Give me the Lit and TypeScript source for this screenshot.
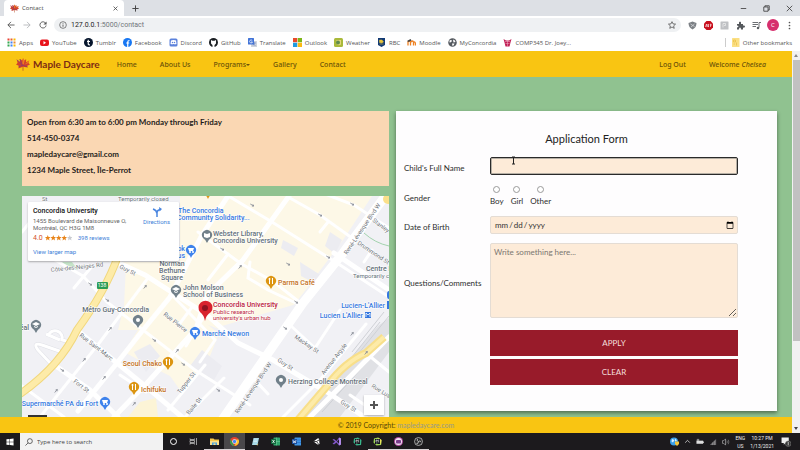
import { LitElement, html, svg, css } from "lit";
import { customElement } from "lit/decorators.js";

const icon = (body: unknown, cls = "i9") =>
  html`<svg class=${cls} viewBox="0 0 18 18" aria-hidden="true">${body}</svg>`;

const leaf = svg`
  <path d="M9 17 L9 11" stroke="#b5532a" stroke-width="1" fill="none"/>
  <path d="M9 1 L11 4 L13 2 L13 6 L17 4 L16 7 L18 9 L14 11 L15 13 L9 12 L3 14 L4 11 L0 9 L2 7 L1 3 L5 6 L5 2 L8 4 Z" fill="#d2402c"/>
  <path d="M9 1 L11 4 L10 9 L8 8 Z M17 4 L16 7 L11 9 Z" fill="#ee7d1f"/>
  <path d="M1 3 L5 6 L8 11 M5 2 L8 9 M3 12 L9 10 L15 12" stroke="#8c3d6b" stroke-width="1" fill="none"/>`;

const bookmarks: { name: string; art: unknown }[] = [
  { name: "Apps", art: svg`${[1, 7, 13].map((y, r) => [1, 7, 13].map((x, c) => svg`<rect x=${x} y=${y} width="4" height="4" fill=${["#ea4335", "#e8602c", "#fbbc05", "#34a853", "#4285f4", "#ea8a35", "#34a853", "#4285f4", "#fbbc05"][r * 3 + c]}/>`))}` },
  { name: "YouTube", art: svg`<rect y="3" width="18" height="13" rx="4" fill="#e8141c"/><path d="M7 6 L12 9.500 L7 13Z" fill="#fff"/>` },
  { name: "Tumblr", art: svg`<circle cx="9" cy="9" r="9" fill="#06152c"/><path d="M8.500 3.500 V12 Q8.500 14 12 13.500 M6 7 H12" stroke="#fff" stroke-width="2.400" fill="none"/>` },
  { name: "Facebook", art: svg`<circle cx="9" cy="9" r="9" fill="#1877f2"/><path d="M9.500 18 V8 Q9.500 5 13 5 M6.500 10 H12.500" stroke="#fff" stroke-width="2.400" fill="none"/>` },
  { name: "Discord", art: svg`<rect x="1" y="1" width="16" height="16" rx="3" fill="#5c82dc"/><path d="M4 5 Q9 3 14 5 L15 12 Q12 13 9 12 Q6 13 3 12Z" fill="#fff"/><circle cx="7" cy="9" r="1.500" fill="#5c82dc"/><circle cx="11" cy="9" r="1.500" fill="#5c82dc"/>` },
  { name: "GitHub", art: svg`<circle cx="9" cy="9" r="9" fill="#1b1f23"/><path d="M7 18 V14 Q3 12 4 8 L4 4 L7 5.500 H11 L14 4 V8 Q15 12 11 14 V18Z" fill="#fff"/>` },
  { name: "Translate", art: svg`<rect x="6" y="6" width="12" height="12" rx="1" fill="#cfd4dc"/><rect width="12" height="13" rx="1" fill="#4274d8"/><path d="M8.500 5 A3 3 0 1 0 9 8 H6" stroke="#fff" stroke-width="1.400" fill="none"/><path d="M10 10 H16 M13 9 V10 Q12 14 10 15 M11 12 L15 16" stroke="#4a6fc0" fill="none"/>` },
  { name: "Outlook", art: svg`<rect width="8.500" height="8.500" fill="#ea4a2a"/><rect x="9.500" width="8.500" height="8.500" fill="#7cb518"/><rect y="9.500" width="8.500" height="8.500" fill="#1e9ae0"/><rect x="9.500" y="9.500" width="8.500" height="8.500" fill="#fbb912"/>` },
  { name: "Weather", art: svg`<rect width="18" height="18" rx="3" fill="#a9b93a"/><path d="M5 4 H14 V13 Q9 16 5 12Z" fill="#e3d77a"/><circle cx="8" cy="9" r="4" fill="#5f8c4e"/>` },
  { name: "RBC", art: svg`<path d="M2 0 H16 V14 L9 18 L2 14Z" fill="#123a75"/><path d="M5 4 H10 L13 8 L9 10 L5 9Z M5 12 H13" fill="#e9c53a" stroke="#e9c53a"/>` },
  { name: "Moodle", art: svg`<path d="M2 15 V8 Q5 4 7 8 V15 M8 8 Q11 4 13 8 V15 M13 9 Q17 5 17 15" stroke="#ee8222" stroke-width="2.600" fill="none"/><path d="M0 6 L7 2 L9 5 L3 8Z" fill="#444"/>` },
  { name: "MyConcordia", art: svg`<circle cx="9" cy="9" r="8.500" fill="#555a60"/><path d="M3 5 Q7 3 8 6 Q6 9 3 9Z M10 3 Q15 4 15 8 L11 9Z M8 11 L13 11 Q12 15 9 16Z" fill="#fff"/>` },
  { name: "COMP345 Dr. Joey...", art: svg`<path d="M1 2 L6 5 H12 L17 2 L15 9 L13 17 H5 L3 9Z" fill="#c01f55"/><path d="M4 7 H14 M5 11 H13 M9 5 V17" stroke="#f3b6cb" stroke-width="1"/>` },
];

const pin = (x: number, y: number, color: string, glyph = "dot") => svg`
  <path d="M${x} ${y + 8} Q${x - 1} ${y + 5} ${x - 4} ${y + 3} A5 5 0 1 1 ${x + 4} ${y + 3} Q${x + 1} ${y + 5} ${x} ${y + 8}Z" fill=${color}/>
  ${glyph === "dot" ? svg`<circle cx=${x} cy=${y} r="2" fill="#fff"/>` : ""}
  ${glyph === "fork" ? svg`<path d="M${x - 1.5} ${y - 3} V${y + 3} M${x + 1.5} ${y - 3} V${y + 3} M${x - 2.5} ${y - 2} H${x - 0.5}" stroke="#fff" fill="none"/>` : ""}
  ${glyph === "cart" ? svg`<path d="M${x - 3} ${y - 2} H${x + 3} L${x + 2} ${y + 1} H${x - 2}Z" fill="#fff"/><circle cx=${x - 1} cy=${y + 2} r="1" fill="#fff"/><circle cx=${x + 2} cy=${y + 2} r="1" fill="#fff"/>` : ""}
  ${glyph === "school" ? svg`<path d="M${x - 4} ${y - 1} L${x} ${y - 3} L${x + 4} ${y - 1} L${x} ${y + 1}Z M${x - 2} ${y + 1} L${x} ${y + 2} L${x + 2} ${y + 1} V${y + 2} L${x} ${y + 3} L${x - 2} ${y + 2}Z" fill="#fff"/>` : ""}
  ${glyph === "book" ? svg`<path d="M${x - 3} ${y - 2} L${x} ${y - 1} L${x + 3} ${y - 2} V${y + 2} L${x} ${y + 3} L${x - 3} ${y + 2}Z" fill="#fff"/>` : ""}`;

const street = (x: number, y: number, angle: number, name: string) =>
  svg`<text class="street" transform="translate(${x} ${y}) rotate(${angle})">${name}</text>`;

const arrow = (x: number, y: number, angle: number) =>
  svg`<path transform="translate(${x} ${y}) rotate(${angle})" d="M-2 0 H2 M0.500 -1 L2 0 L0.500 1" stroke="#8a8f98" stroke-width="0.800" fill="none"/>`;

@customElement("street-map")
class StreetMap extends LitElement {
  static styles = css`
    :host { display: block; position: relative; overflow: hidden; background: #f1f1f5; font-family: Roboto, sans-serif; }
    .canvas { position: absolute; inset: 0; width: 100%; height: 100%; }
    .street { font-size: 6px; fill: #6d7278; paint-order: stroke; stroke: #fff; stroke-width: 1px; }
    .wide { font-size: 7px; }
    .place { font-size: 7px; paint-order: stroke; stroke: #fff; stroke-width: 1px; font-weight: 500; }
    .small { font-size: 6px; font-weight: 400; }
    .end { text-anchor: end; }
    .mid { text-anchor: middle; }
    .grey { fill: #647078; } .blue { fill: #3578e0; } .orange { fill: #c4711a; } .red { fill: #bb2238; }
    .card { position: absolute; left: 6px; top: 6px; width: 151px; height: 59px; box-sizing: border-box; padding: 4px 5px;
      background: #fff; box-shadow: 0 1px 2px rgba(0,0,0,.3); display: flex; justify-content: space-between; border-radius: 1px; }
    .info { display: flex; flex-direction: column; font-size: 6px; line-height: 7px; color: #666; white-space: nowrap; }
    .name { font-size: 7px; line-height: 11px; font-weight: 500; color: #111; }
    .rating { display: flex; align-items: center; gap: 2px; margin: 3px 0 6px; line-height: 8px; }
    .score { color: #d4502a; font-size: 7px; }
    .stars { width: 27px; height: 6px; margin-right: 4px; }
    a { color: #427fd8; text-decoration: none; }
    .directions { display: flex; flex-direction: column; align-items: center; gap: 1px; font-size: 6px; line-height: 8px; margin: 1px 4px 0 0; }
    .directions svg { width: 10px; height: 10px; }
    .plus { position: absolute; right: 5px; bottom: 2px; width: 20px; height: 20px; padding: 0; border: 0; background: #fff;
      box-shadow: 0 1px 2px rgba(0,0,0,.3); display: grid; place-items: center; }
    .plus svg { width: 10px; height: 10px; }
  `;

  render() {
    return html`
      <svg class="canvas" viewBox="22 196 367 221" preserveAspectRatio="xMidYMid slice" role="img" aria-label="Map around Concordia University">
        <path d="M180 196 H372 L343 240 L304 292 L262 345 L200 322 L160 300 L120 262 L180 262Z" fill="#fdf8e7"/>
        <path d="M126 265 L175 290 L200 318 L232 345 L214 362 L180 390 L170 376 L150 366 L124 352 L138 330 L118 330 L124 306Z" fill="#fdf8e7"/>
        <path d="M222 326 L300 303 L262 362 L232 400 L206 366Z" fill="#f1f1f5"/>
        <path d="M134 352 L150 344 L160 356 L146 372Z M330 232 L342 240 L335 254 L325 246Z M283 240 L298 248 L294 256 L281 248Z M300 262 L322 276 L316 284 L301 276Z M202 350 L222 366 L214 380 L190 366Z" fill="#ececf1"/>
        <path d="M140 402 L156 398 L158 417 H128Z" fill="#fcf4d6"/>
        <path d="M62 262 L72 262 L78 270 L66 268Z" fill="#c5e3c8"/>
        <path d="M300 417 L378 326 L389 318 V352 L340 417Z" fill="#e0e1e5"/>
        <path d="M352 352 L384 312 M358 354 L389 316 M348 362 L380 322 M322 412 L378 350" stroke="#cfd1d6" stroke-width="1" fill="none"/>
        <g stroke="#fff" fill="none" stroke-linecap="round">
          <g stroke-width="3">
            <path d="M230 197 L272 222 L337 263 L392 299"/>
            <path d="M288 197 L320 215 L352 238"/>
            <path d="M325 194 L354 205 L389 228"/>
            <path d="M198 232 L240 263 L274 282 L303 305"/>
            <path d="M83 276 L107 302 L143 330 L195 370 L250 405"/>
            <path d="M55 260 L83 276"/>
            <path d="M173 296 L215 340 L200 362"/>
            <path d="M120 375 L146 392"/>
            <path d="M250 262 L248 278 L268 290 L298 304"/>
            <path d="M328 222 L320 232"/>
            <path d="M228 254 L208 280"/>
            <path d="M148 278 L100 342 L60 392 L40 417"/>
            <path d="M192 307 L178 326 M186 346 L205 315"/>
            <path d="M93 265 L74 288"/>
            <path d="M205 365 L168 410 M224 378 L185 417"/>
            <path d="M290 325 L315 348 L340 310"/>
            <path d="M283 417 L320 380 L366 324"/>
            <path d="M22 386 L64 417"/>
            <path d="M255 380 L268 394"/>
            <path d="M372 358 L389 372 M350 395 L375 412"/>
            <path d="M22 232 L30 222 M372 250 L364 262"/>
          </g>
          <g stroke-width="5">
            <path d="M228 196 L202 235 L170 297 L143 330 L117 363 L78 411"/>
            <path d="M289 196 L243 260 L207 295 L196 329 L147 383 L114 417"/>
            <path d="M78 331 L117 363 L150 390 L182 417"/>
            <path d="M53 364 L90 390 L118 417"/>
            <path d="M110 259 L145 275 L207 315 L238 343 L273 360 L327 392 L366 418"/>
            <path d="M389 337 L335 392 L310 417"/>
          </g>
          <path d="M389 191 L343 253 L303 303 L262 362 L222 420" stroke-width="9"/>
          <path d="M334 253 L389 290" stroke-width="5"/>
        </g>
        <path d="M52 365 L38 350 Q32 342 42 345 L62 352 M60 340 L46 334 M70 342 L62 340 a7 7 0 1 0 -14 -4" fill="none" stroke="#dfe0e6" stroke-width="4"/>
        <path d="M52 365 L38 350 Q32 342 42 345 L62 352 M60 340 L46 334 M70 342 L62 340 a7 7 0 1 0 -14 -4" fill="none" stroke="#fff" stroke-width="3"/>
        <path d="M118 256 Q106 290 77 330 Q60 366 20 394" fill="none" stroke="#f1d77c" stroke-width="8"/>
        <path d="M118 256 Q106 290 77 330 Q60 366 20 394" fill="none" stroke="#fdeba8" stroke-width="6"/>
        <path d="M384 337 L366 353 Q345 362 327 386 L298 420" fill="none" stroke="#f8df8a" stroke-width="8"/>
        <path d="M384 337 L366 353 Q345 362 327 386 L298 420" fill="none" stroke="#fdeba8" stroke-width="4"/>
        <path d="M364 233 Q375 243 389 246" fill="none" stroke="#a3d3ae"/>
        <circle cx="388" cy="199" r="5" fill="#fbe08a"/>
        <rect x="97" y="282" width="11" height="7" rx="1" fill="#2c9c55"/>
        <text x="102" y="287" class="mid" font-size="5" fill="#fff">138</text>
        ${[[252, 205, 30], [320, 215, 30], [352, 204, 30], [222, 249, 30], [288, 264, 30], [328, 257, 30], [240, 267, -50], [107, 300, 35], [90, 284, 35], [110, 329, -50], [145, 287, -50], [154, 340, 35], [84, 360, -50], [177, 351, -50], [104, 378, -50], [56, 391, -50], [134, 404, -50], [183, 364, 35], [62, 370, 35], [352, 334, -50], [366, 353, -50], [218, 390, 35], [296, 302, 35], [285, 328, 35]].map(([x, y, a]) => arrow(x, y, a))}
        ${street(51, 272, -6, "Côte-des-Neiges Rd")}
        ${street(119, 268, 26, "Guy St")}
        ${street(79, 336, 38, "Rue Saint-Marc")}
        ${street(73, 382, 38, "Fort St")}
        ${street(163, 315, 38, "Rue Pierce")}
        ${street(180, 394, -52, "Tupper St")}
        ${street(189, 415, -50, "Baile St")}
        ${street(347, 255, -56, "René-Lévesque Blvd W")}
        ${street(238, 414, -56, "René-Lévesque Blvd W")}
        ${street(277, 361, 34, "Guy St")}
        ${street(294, 338, 34, "Mackay St")}
        ${street(324, 375, -52, "Avenue Argyle")}
        ${street(340, 403, 32, "Guy St")}
        ${street(372, 221, 38, "Stanley St")}
        ${street(357, 244, 34, "Drummond St")}
        ${street(371, 387, 32, "Rue Lusignan")}
        <text x="118" y="201" class="place small grey">Temporarily closed</text>
        <text x="42" y="201" class="street">St</text>
        <text x="178" y="213" class="place blue">The Concordia</text>
        <text x="177" y="220" class="place blue">Community Solidarity...</text>
        <text x="213" y="236" class="place grey">Webster Library,</text>
        <text x="213" y="243" class="place grey">Concordia University</text>
        <text x="185" y="251" class="place blue end">Book</text>
        <text x="185" y="258" class="place blue end">Campus</text>
        <text x="172" y="266" class="place grey mid">Norman</text>
        <text x="172" y="273" class="place grey mid">Bethune</text>
        <text x="172" y="280" class="place grey mid">Square</text>
        <text x="183" y="290" class="place grey">John Molson</text>
        <text x="183" y="297" class="place grey">School of Business</text>
        <text x="278" y="285" class="place orange">Parma Café</text>
        <text x="366" y="271" class="place grey">Centre Bell</text>
        <text x="353" y="278" class="place small grey">Temporarily closed</text>
        <text x="213" y="307" class="place red">Concordia University</text>
        <text x="213" y="314" class="place small red">Public research</text>
        <text x="213" y="320" class="place small red">university's urban hub</text>
        <text x="385" y="308" class="place blue end">Lucien-L'Allier</text>
        <text x="363" y="318" class="place blue end">Lucien L'Allier</text>
        <rect x="365" y="312" width="6" height="6" fill="#3578e0"/><path d="M366 317 V313 L368 315 L370 313 V317" stroke="#fff" stroke-width="0.800" fill="none"/>
        <rect x="387" y="301" width="4" height="8" fill="#3578e0"/><rect x="387" y="291" width="4" height="8" rx="3" fill="#3578e0"/>
        <text x="202" y="336" class="place blue">Marché Newon</text>
        <text x="149" y="312" class="place grey end">Métro Guy-Concordia</text>
        <text x="29" y="330" class="place grey end">Montréal</text>
        <text x="162" y="366" class="place orange end">Seoul Chako</text>
        <text x="141" y="392" class="place orange">Ichifuku</text>
        <text x="98" y="406" class="place blue end">Supermarché PA du Fort</text>
        <text x="288" y="384" class="place grey">Herzing College Montreal</text>
        ${pin(207, 235, "#71808a", "book")} ${pin(191, 250, "#3f83ec", "cart")} ${pin(271, 281, "#dc9512", "fork")}
        ${pin(176, 290, "#71808a", "school")} ${pin(138, 320, "#71808a")} ${pin(36, 325, "#71808a", "school")}
        ${pin(195, 332, "#3f83ec", "cart")} ${pin(168, 362, "#dc9512", "fork")} ${pin(134, 387, "#dc9512", "fork")}
        ${pin(105, 402, "#3f83ec", "cart")} ${pin(281, 380, "#71808a")} ${pin(208, 191, "#dc9512", "fork")}
        <path d="M205 321 Q204 315 200 312 A7 7 0 1 1 211 312 Q206 315 205 321Z" fill="#d8232e"/>
        <circle cx="205" cy="308" r="3" fill="#8c1420"/>
        <rect x="28" y="415" width="19" height="3" fill="#333"/>
      </svg>
      <div class="card">
        <div class="info">
          <span class="name">Concordia University</span>
          <span>1455 Boulevard de Maisonneuve O,</span>
          <span>Montréal, QC H3G 1M8</span>
          <span class="rating"><span class="score">4.0</span>
            <svg class="stars" viewBox="0 0 54 12" aria-label="4 of 5 stars">
              ${[0, 1, 2, 3, 4].map((i) => svg`<path transform="translate(${i * 11} 0)" d="M5.500 0 L7 4 H11 L8 7 L9 11 L5.500 8.500 L2 11 L3 7 L0 4 H4Z" fill=${i < 4 ? "#e8841a" : "#c9cbd0"}/>`)}
            </svg>
            <a href="#reviews">398 reviews</a></span>
          <a href="#map">View larger map</a>
        </div>
        <a class="directions" href="#directions">
          <svg viewBox="0 0 20 20" aria-hidden="true"><path d="M10 20 V12 Q10 6 17 5 M10 13 Q9 6 2 4" stroke="#4a86e0" stroke-width="3" fill="none"/><path d="M14 0 L20 4 L15 9Z" fill="#4a86e0"/></svg>
          Directions</a>
      </div>
      <button class="plus" aria-label="Zoom in"><svg viewBox="0 0 10 10"><path d="M5 1 V9 M1 5 H9" stroke="#555" stroke-width="2"/></svg></button>
    `;
  }
}

const taskIcons: { art: unknown; open?: boolean; active?: boolean; label: string }[] = [
  { label: "Cortana", art: svg`<circle cx="9" cy="9" r="6" stroke="#fff" stroke-width="2" fill="none"/>` },
  { label: "Task View", art: svg`<path d="M2 3 V5 H11 V3 M2 15 V13 H11 V15 M2 7 H11 V11 H2Z M15 2 V16" stroke="#ddd" stroke-width="1.300" fill="none"/>` },
  { label: "Files", open: true, art: svg`<path d="M0 3 H7 L9 5 H18 V16 H0Z" fill="#f6c94c"/><path d="M0 8 H18 V16 H0Z" fill="#fbe08c"/><path d="M4 16 V11 H14 V16 H11 V13 H7 V16Z" fill="#4aa3df"/>` },
  { label: "Chrome", open: true, active: true, art: svg`<circle cx="9" cy="9" r="9" fill="#e2402f"/><path d="M1.200 4.500 L6 13 L9 18 A9 9 0 0 1 1.200 4.500Z" fill="#2fa24f"/><path d="M9 18 L13 9 L12.500 5 H17 A9 9 0 0 1 9 18Z" fill="#fcc928"/><circle cx="9" cy="9" r="4.500" fill="#fff"/><circle cx="9" cy="9" r="3.300" fill="#4285f4"/>` },
  { label: "Notepad", art: svg`<path d="M5 2 H16 L13 16 H2Z" fill="#a9d9e6"/><path d="M6 6 H13 M5 9 H12" stroke="#f4fbff"/><path d="M11 16 L15 13 L13 17Z" fill="#efcf70"/>` },
  { label: "Excel", art: svg`<rect x="5" y="1" width="13" height="16" rx="1" fill="#2fa56b"/><path d="M11 1 V17 M5 9 H18" stroke="#7fd0a4"/><rect y="4" width="10" height="10" fill="#12683c"/><path d="M3 6 L7 12 M7 6 L3 12" stroke="#fff" stroke-width="1.500"/>` },
  { label: "Word", art: svg`<rect x="5" y="1" width="13" height="16" rx="1" fill="#3f95e6"/><path d="M5 6 H18 M5 11 H18" stroke="#2463b8"/><rect y="4" width="10" height="10" fill="#1b4fa0"/><path d="M2 6 L3.500 12 L5 8 L6.500 12 L8 6" stroke="#fff" stroke-width="1.200" fill="none"/>` },
  { label: "Unity", art: svg`<path d="M3 9 L11 3 L14 3 L15 14 L11 15Z" fill="#fff"/><path d="M9 9 L14 6 M9 9 L13 14 M3 9 H9" stroke="#1c1a1c" stroke-width="1.600"/>` },
  { label: "Visual Studio", art: svg`<path d="M1 5 L4 4 L9 8 L14 1 L18 3 V15 L14 17 L9 11 L4 15 L1 13 L6 9.500Z" fill="#8157c8"/><path d="M14 5 L10 9 L14 13Z" fill="#1c1a1c"/><path d="M14 1 L18 3 V15 L14 17Z" fill="#b18be8"/>` },
  { label: "PyCharm", art: svg`<path d="M2 3 L10 1 L17 6 L16 16 L7 17 L1 11Z" fill="#38b58b"/><rect x="4" y="4" width="10" height="10" fill="#10151a"/><path d="M6 10 V6 H8.500 V8 H6 M12.500 6 H10.500 V10 H12.500 M6 12 H9" stroke="#fff" fill="none"/>` },
  { label: "PyCharm CE", open: true, art: svg`<path d="M2 3 L10 1 L17 6 L16 16 L7 17 L1 11Z" fill="#9ed655"/><path d="M10 1 L17 6 L16 16Z" fill="#f0e45a"/><rect x="4" y="4" width="10" height="10" fill="#10151a"/><path d="M6 10 V6 H8.500 V8 H6 M12.500 6 H10.500 V10 H12.500 M6 12 H9" stroke="#fff" fill="none"/>` },
  { label: "Recorder", open: true, art: svg`<circle cx="9" cy="9" r="9" fill="#b04ba0"/><circle cx="9" cy="9" r="7" fill="#f1e3f2"/><rect x="4" y="6" width="10" height="7" rx="2" fill="#7a3d8c"/>` },
  { label: "OBS", open: true, art: svg`<circle cx="9" cy="9" r="8" fill="#2b2a2c" stroke="#cfcfcf" stroke-width="1.400"/><path d="M9 9 Q5 8 7 4 M9 9 Q13 6 14 10 M9 9 Q9 14 5 13" stroke="#cfcfcf" stroke-width="1.600" fill="none"/>` },
];

const extensions: unknown[] = [
  svg`<path d="M9 1 L17 4 Q17 13 9 17 Q1 13 1 4Z" fill="#7c8085"/><path d="M5 6 L13 11 M13 6 L6 12" stroke="#d9dbdd" stroke-width="1.500"/>`,
  svg`<path d="M5 0 H13 L18 5 V13 L13 18 H5 L0 13 V5Z" fill="#c8101e"/><path d="M3 12 L5 6 L6 12 M8 12 V6 Q11 7 8 9 Q12 10 8 12 M13 12 V6 Q17 8 13 9" stroke="#fff" stroke-width="1.200" fill="none"/>`,
  svg`<rect x="1" y="1" width="16" height="16" rx="1" fill="#bfc1c4"/><path d="M6 13 V5 H11 V9 H8" stroke="#eee" stroke-width="1.500" fill="none"/>`,
  svg`<path d="M2 6 H6 Q5 1 8 1 Q11 1 10 6 H14 V9 Q18 8 18 11 Q18 14 14 13 V17 H10 Q10 13 8 13 Q6 13 6 17 H2 V13 Q5 12 5 10 Q4 9 2 9Z" fill="#54585c"/>`,
  svg`<path d="M1 3 H12 M1 7 H12 M1 11 H8" stroke="#5b5f63" stroke-width="1.800"/><path d="M14 13 V3 H18" stroke="#5b5f63" stroke-width="1.800" fill="none"/><circle cx="12" cy="14" r="2.500" fill="#5b5f63"/>`,
];

@customElement("app-root")
class AppRoot extends LitElement {
  static styles = css`
    :host { display: flex; flex-direction: column; height: 100vh; min-height: 450px; overflow: hidden; font-family: "Open Sans", "Noto Sans", sans-serif; color: #333; }
    * { box-sizing: border-box; }
    button, input, textarea { font-family: inherit; margin: 0; }
    button { padding: 0; border: 0; background: none; cursor: pointer; }
    a { text-decoration: none; color: inherit; }
    svg { display: block; flex: none; }
    .i7 { width: 7px; height: 7px; } .i8 { width: 8px; height: 8px; } .i9 { width: 9px; height: 9px; } .i10 { width: 10px; height: 10px; }
    .spacer { flex: 1; }

    .tabs { flex: none; height: 16px; background: #dde0e5; display: flex; align-items: center; padding: 0 6px 0 4px; font-size: 6px; gap: 7px; }
    .tab { width: 120px; height: 16px; background: #fff; border-radius: 4px 4px 0 0; display: flex; align-items: center; gap: 3px; padding: 0 4px 0 6px; color: #444; }
    .tabs button { display: grid; place-items: center; width: 9px; height: 9px; }
    .window { display: flex; gap: 14px; }

    .toolbar { flex: none; height: 18px; background: #fff; display: flex; align-items: center; padding: 0 6px; gap: 7px; }
    .toolbar button { display: grid; place-items: center; width: 9px; height: 9px; }
    .url { flex: 1; height: 14px; border-radius: 7px; background: #eff1f3; display: flex; align-items: center; gap: 4px; padding: 0 5px; font: 7px/14px Roboto, sans-serif; color: #70757a; }
    .url b { font-weight: 400; color: #222; }
    .toolbar .avatar { width: 12px; height: 12px; border-radius: 50%; background: #d62f6d; color: #fff; font-size: 6px; line-height: 12px; margin: 0 -1px; }

    .bookmarks { flex: none; height: 17px; background: #fff; display: flex; align-items: center; gap: 7px; padding: 0 8px 0 7px; font-size: 6px; color: #555; white-space: nowrap; }
    .bookmarks a { display: flex; align-items: center; gap: 3px; }
    .bookmarks .other { border-left: 1px solid #ccc; padding-left: 5px; line-height: 8px; }

    .view { flex: 1; min-height: 0; display: flex; }
    .page { flex: 1; min-width: 0; display: flex; flex-direction: column; background: #90c290; }
    .scroll { width: 8px; background: #f1f1f1; display: flex; flex-direction: column; align-items: center; justify-content: space-between; padding: 3px 0; }
    .thumb { width: 7px; flex: 1; margin: 3px 0 86px; background: #c1c1c1; }
    .scroll svg { width: 4px; height: 3px; }

    nav { flex: none; height: 26px; background: #f9c512; display: flex; align-items: center; gap: 23px; padding: 0 26px 0 16px; font-size: 7px; color: #6b5209; font-family: "Noto Sans", sans-serif; font-weight: 500; }
    .brand { display: flex; align-items: center; gap: 3px; font: 700 10px/16px Lato, sans-serif; color: #7d2c14; margin-right: -6px; }
    .brand svg { width: 14px; height: 15px; }
    .caret { display: inline-block; border: 2px solid transparent; border-top-color: currentColor; border-bottom: 0; vertical-align: middle; }

    main { flex: 1; min-height: 0; display: grid; grid-template-columns: 367fr 381fr; gap: 7px; padding: 34px 15px 0 22px; }
    .left { display: flex; flex-direction: column; gap: 10px; min-height: 0; }
    .contact { background: #fad7b3; height: 75px; padding: 3px 5px; font: 700 8px/16px Lato, sans-serif; color: #1f1c1a; }
    .contact p { margin: 0; }
    street-map { flex: 1; }

    form { align-self: start; background: #fefdfe; box-shadow: 0 2px 4px rgba(0,0,0,.45); padding: 20px 39px 26px 8px; font: 8px/10px Lato, sans-serif; color: #2d2d2d;
      display: grid; grid-template-columns: 86px 1fr; row-gap: 9px; align-items: center; }
    h1 { grid-column: 1 / -1; margin: 0 -31px 1px 0; font-size: 11px; line-height: 16px; font-weight: 400; text-align: center; color: #222; }
    .label { padding-top: 4px; }
    .field { position: relative; display: flex; }
    .box { width: 100%; height: 18px; border: 1px solid #e4dcd4; border-radius: 2px; background: #fdebd8; font-size: 8px; padding: 0 3px; color: #333; outline: none; }
    .box::placeholder { color: #7b7670; }
    .box.focused { border-color: #2a2a2a; box-shadow: inset 0 0 0 1px #b5afa5; }
    textarea.box { height: 75px; padding: 3px; line-height: 11px; resize: vertical; }
    .date::-webkit-calendar-picker-indicator { padding: 0; width: 8px; height: 8px; margin: 0; }
    .cursor { position: absolute; left: 21px; top: -1px; width: 5px; height: 9px; }
    .choices { display: flex; gap: 7px; height: 23px; align-items: center; }
    .choices label { display: flex; flex-direction: column; align-items: center; gap: 3px; }
    .choices input { appearance: none; width: 7px; height: 7px; border: 1px solid #999; border-radius: 50%; background: #fff; }
    .actions { grid-column: 2; display: flex; flex-direction: column; gap: 3px; margin-top: 3px; }
    .actions button { height: 26px; background: #981b2a; color: #f5dfdc; font-size: 8px; }

    footer { flex: none; height: 16px; background: #f9c512; font: 7px/16px Lato, sans-serif; text-align: center; color: #574509; }
    footer a { color: #969a8c; }

    .taskbar { flex: none; height: 17px; background: #1c1a1d; display: flex; align-items: center; color: #eee; }
    .start { width: 20px; height: 17px; display: grid; place-items: center; }
    .search { width: 143px; height: 17px; background: #f2f2f2; display: flex; align-items: center; gap: 4px; padding-left: 5px; }
    .search input { flex: 1; min-width: 0; border: 0; padding: 0; background: none; font-size: 6px; outline: none; }
    .search input::placeholder { color: #444; }
    .apps { display: flex; width: 266px; height: 17px; }
    .apps button { flex: 1; display: grid; place-items: center; border-bottom: 1px solid transparent; }
    .apps .open { border-color: #d9d3d6; }
    .apps .active { background: #4a484b; }
    .tray { display: flex; align-items: center; gap: 5px; padding-right: 9px; font: 5px/8px Roboto, sans-serif; text-align: center; white-space: nowrap; }
    .tray .i10 { margin-left: 2px; }
  `;

  render() {
    return html`
      <header class="tabs">
        <div class="tab">${icon(leaf)}<span>Contact</span><span class="spacer"></span>
          <button aria-label="Close tab">${icon(svg`<path d="M4 4 L14 14 M14 4 L4 14" stroke="#444" stroke-width="2"/>`, "i7")}</button></div>
        <button aria-label="New tab">${icon(svg`<path d="M9 1 V17 M1 9 H17" stroke="#444" stroke-width="2.500"/>`, "i7")}</button>
        <span class="spacer"></span>
        <div class="window">
          <button aria-label="Minimize">${icon(svg`<path d="M2 9 H16" stroke="#333" stroke-width="2"/>`, "i7")}</button>
          <button aria-label="Restore">${icon(svg`<path d="M2 5 H13 V16 H2Z M5 5 V2 H16 V13 H13" stroke="#333" stroke-width="2" fill="none"/>`, "i7")}</button>
          <button aria-label="Close">${icon(svg`<path d="M2 2 L16 16 M16 2 L2 16" stroke="#333" stroke-width="2"/>`, "i7")}</button>
        </div>
      </header>
      <div class="toolbar">
        <button aria-label="Back">${icon(svg`<path d="M17 9 H2 M9 2 L2 9 L9 16" stroke="#555" stroke-width="2" fill="none"/>`, "i8")}</button>
        <button aria-label="Forward">${icon(svg`<path d="M1 9 H16 M9 2 L16 9 L9 16" stroke="#b5b7ba" stroke-width="2" fill="none"/>`, "i8")}</button>
        <button aria-label="Reload">${icon(svg`<path d="M15 5 A7 7 0 1 0 16 10" stroke="#555" stroke-width="2" fill="none"/><path d="M17 1 V8 H10Z" fill="#555"/>`, "i8")}</button>
        <div class="url">${icon(svg`<circle cx="9" cy="9" r="7.500" stroke="#555" stroke-width="1.600" fill="none"/><path d="M9 8 V13 M9 5 V6.500" stroke="#555" stroke-width="2"/>`, "i8")}
          <span><b>127.0.0.1</b>:5000/contact</span><span class="spacer"></span>
          ${icon(svg`<path d="M9 1.500 L11.300 6.500 L17 7 L12.700 11 L14 16.500 L9 13.500 L4 16.500 L5.300 11 L1 7 L6.700 6.500Z" stroke="#444" stroke-width="1.600" fill="none"/>`, "i8")}</div>
        ${extensions.map((e) => html`<button aria-label="Extension">${icon(e)}</button>`)}
        <button class="avatar" aria-label="Profile">C</button>
        <button aria-label="Menu">${icon(svg`<circle cx="9" cy="3" r="1.700" fill="#555"/><circle cx="9" cy="9" r="1.700" fill="#555"/><circle cx="9" cy="15" r="1.700" fill="#555"/>`)}</button>
      </div>
      <div class="bookmarks">
        ${bookmarks.map((b) => html`<a href="#">${icon(b.art)}<span>${b.name}</span></a>`)}
        <span class="spacer"></span>
        <a class="other" href="#">${icon(svg`<rect x="2" width="15" height="18" rx="1" fill="#fbdf83"/><path d="M5 4 H9 V8 H5Z M11 9 V15 M5 12 H8" stroke="#e9bf45" stroke-width="1.500" fill="none"/>`)}<span>Other bookmarks</span></a>
      </div>

      <div class="view">
        <div class="page">
          <nav>
            <a class="brand" href="#">${icon(leaf)}<span>Maple Daycare</span></a>
            <a href="#home">Home</a><a href="#about">About Us</a><a href="#programs">Programs<i class="caret"></i></a><a href="#gallery">Gallery</a><a href="#contact">Contact</a>
            <span class="spacer"></span>
            <a href="#logout">Log Out</a><a href="#me">Welcome <em>Chelsea</em></a>
          </nav>
          <main>
            <section class="left">
              <div class="contact">
                <p>Open from 6:30 am to 6:00 pm Monday through Friday</p>
                <p>514-450-0374</p>
                <p>mapledaycare@gmail.com</p>
                <p>1234 Maple Street, Île-Perrot</p>
              </div>
              <street-map></street-map>
            </section>
            <form @submit=${(e: Event) => e.preventDefault()}>
              <h1>Application Form</h1>
              <label class="label" for="name">Child's Full Name</label>
              <div class="field"><input id="name" class="box focused" type="text">
                <svg class="cursor" viewBox="0 0 5 9" aria-hidden="true"><path d="M1 1 H4 M2.500 1 V8 M1 8 H4" stroke="#222" fill="none"/></svg></div>
              <span class="label" id="gender">Gender</span>
              <div class="choices" role="radiogroup" aria-labelledby="gender">
                ${["Boy", "Girl", "Other"].map((g) => html`<label><input type="radio" name="gender" value=${g}>${g}</label>`)}
              </div>
              <label class="label" for="dob">Date of Birth</label>
              <div class="field"><input id="dob" class="box date" type="date"></div>
              <label class="label" for="notes">Questions/Comments</label>
              <div class="field"><textarea id="notes" class="box" placeholder="Write something here..."></textarea></div>
              <div class="actions"><button type="submit">APPLY</button><button type="reset">CLEAR</button></div>
            </form>
          </main>
          <footer>© 2019 Copyright: <a href="#site">mapledaycare.com</a></footer>
        </div>
        <div class="scroll" aria-hidden="true">
          <svg viewBox="0 0 4 3"><path d="M0 3 L2 0 L4 3Z" fill="#888"/></svg>
          <div class="thumb"></div>
          <svg viewBox="0 0 4 3"><path d="M0 0 L2 3 L4 0Z" fill="#444"/></svg>
        </div>
      </div>

      <div class="taskbar">
        <button class="start" aria-label="Start">${icon(svg`<path d="M1 3 L8 2 V8.500 H1Z M9 2 L17 1 V8.500 H9Z M1 9.500 H8 V16 L1 15Z M9 9.500 H17 V17 L9 16Z" fill="#fff"/>`, "i8")}</button>
        <label class="search">${icon(svg`<circle cx="11" cy="7" r="5.500" stroke="#333" stroke-width="1.600" fill="none"/><path d="M7 11 L1 17" stroke="#333" stroke-width="1.600"/>`, "i8")}
          <input type="text" aria-label="Search" placeholder="Type here to search"></label>
        <div class="apps">
          ${taskIcons.map((t) => html`<button aria-label=${t.label} class="${t.open ? "open" : ""} ${t.active ? "active" : ""}">${icon(t.art)}</button>`)}
        </div>
        <span class="spacer"></span>
        <div class="tray">
          ${icon(svg`<circle cx="8" cy="9" r="8" fill="#3aa0e8"/><path d="M4 4 L9 6 L6 11 L3 9Z M10 3 L14 7 L10 9Z" fill="#dff2ff"/><path d="M10 9 H18 V14 L14 18 L10 14Z" fill="#f5c53c"/>`)}
          ${icon(svg`<path d="M3 12 L9 6 L15 12" stroke="#ddd" stroke-width="2" fill="none"/>`, "i7")}
          ${icon(svg`<path d="M1 6 H16 V13 H1Z" fill="#ddd"/><rect x="16" y="8" width="2" height="3" fill="#ddd"/><path d="M3 2 V7 M6 2 V7" stroke="#ddd" stroke-width="1.500"/>`, "i8")}
          ${icon(svg`<path d="M2 16 L16 2 V16Z" fill="#6e6c6f"/><path d="M8 16 V10 M12 16 V6" stroke="#aaa"/>`, "i8")}
          ${icon(svg`<path d="M1 6 H4 L8 2 V16 L4 12 H1Z" stroke="#ccc" stroke-width="1.300" fill="none"/><path d="M11 6 Q13 9 11 12 M14 4 Q17 9 14 14" stroke="#999" stroke-width="1.300" fill="none"/>`, "i8")}
          <span>ENG<br>US</span>
          <span>10:27 PM<br>1/13/2021</span>
          ${icon(svg`<path d="M1 1 H14 V11 H8 L5 14 V11 H1Z" fill="#eee"/><circle cx="13" cy="12" r="5" fill="#333" stroke="#888"/><path d="M13 9 V15" stroke="#ddd" stroke-width="1.500"/>`, "i10")}
        </div>
      </div>
    `;
  }
}
